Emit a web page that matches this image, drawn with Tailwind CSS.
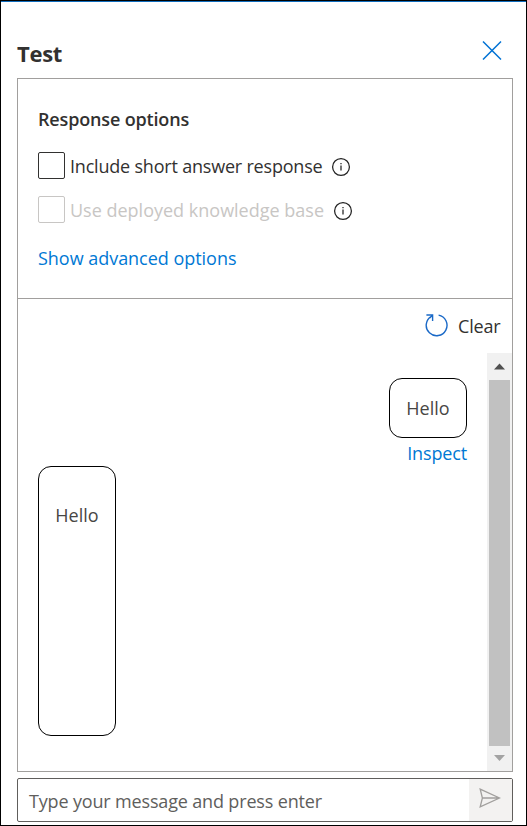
<!DOCTYPE html>
<html lang="en">
<head>
<meta charset="utf-8">
<title>Test</title>
<script src="https://cdn.jsdelivr.net/npm/@tailwindcss/browser@4"></script>
</head>
<body class="bg-white">
<div class="w-[527px] h-[826px] border border-black overflow-hidden font-['Open_Sans','Noto_Sans',sans-serif] text-[18px] leading-6 text-[#323130]">
  <div class="h-full border-t border-[#0f6cbd] pl-4 pr-[13px] flex flex-col">
    <header class="h-[76px] shrink-0 flex justify-between">
      <h1 class="mt-[35px] text-[22px] leading-8 font-bold tracking-[-0.3px] whitespace-nowrap"><span>Test</span></h1>
      <button aria-label="Close" class="mt-[38px] mr-[11px] size-5"><svg class="size-5" viewBox="0 0 20 20" fill="none" stroke="#0072d4" stroke-width="1.5"><path d="M1 1.5 19 19.5M19 1.5 1 19.5"/></svg></button>
    </header>
    <main class="h-[694px] shrink-0 border border-[#a19f9d] flex flex-col">
      <section class="h-[220px] shrink-0 border-b border-[#a19f9d] pl-5 pt-7">
        <h2 class="font-semibold text-[18px] leading-6 tracking-[-0.16px] whitespace-nowrap"><span>Response options</span></h2>
        <div class="mt-[21px] flex items-center h-[27px] whitespace-nowrap">
          <span class="size-[27px] border border-[#323130] rounded-[2px]"></span>
          <span class="ml-[5px] w-[254px] tracking-[-0.2px]"><span>Include short answer response</span></span>
          <svg class="ml-[7px] mt-[3px] size-5" viewBox="0 0 20 20" fill="none" stroke="#222" stroke-width="1.25"><circle cx="10" cy="10" r="8.4"/><path d="M10 8.5v5M10 6v1.3"/></svg>
        </div>
        <div class="mt-[17px] flex items-center h-[27px] whitespace-nowrap">
          <span class="size-[27px] border border-[#c8c6c4] rounded-[2px]"></span>
          <span class="ml-[5px] w-[254px] text-[#c8c6c4]"><span>Use deployed knowledge base</span></span>
          <svg class="ml-[9px] mt-[3px] size-5" viewBox="0 0 20 20" fill="none" stroke="#222" stroke-width="1.25"><circle cx="10" cy="10" r="8.4"/><path d="M10 8.5v5M10 6v1.3"/></svg>
        </div>
        <a class="block mt-[23px] text-[#0078d4] tracking-[-0.03px] whitespace-nowrap"><span>Show advanced options</span></a>
      </section>
      <div class="h-[54px] shrink-0 flex justify-end pr-3">
        <svg class="mt-[14px] size-6" viewBox="0 0 24 24" fill="none" stroke="#1a69c7" stroke-width="1.4"><path d="M14.6 2.1A10.4 10.4 0 1 1 7.4 3.3M2.4 2H8.6V8M8.3 2.5 5.7 5"/></svg>
        <span class="ml-2.5 mt-[15px] w-[42px] tracking-[-0.2px]"><span>Clear</span></span>
      </div>
      <div class="flex-1 flex min-h-0">
        <div class="flex-1 px-5 pt-[25px] flex flex-col">
          <div class="self-end w-[78px] h-[60px] border border-black rounded-[13px] flex items-center justify-center text-[#484644]"><span>Hello</span></div>
          <a class="self-end mt-[3px] h-[25px] text-[#0078d4] tracking-[-0.15px]"><span>Inspect</span></a>
          <div class="w-[78px] h-[270px] border border-black rounded-[13px] pt-9 text-center text-[#484644]"><span>Hello</span></div>
        </div>
        <div class="w-[25px] bg-[#f1f1f1] flex flex-col items-center justify-between">
          <svg class="w-[25px] h-[27px]" viewBox="0 0 25 27"><path d="M7 16.5 12.5 10.5 18 16.5Z" fill="#505050"/></svg>
          <div class="w-[21px] flex-1 bg-[#c1c1c1]"></div>
          <svg class="w-[25px] h-[25px]" viewBox="0 0 25 25"><path d="M7 9 18 9 12.5 15Z" fill="#a3a3a3"/></svg>
        </div>
      </div>
    </main>
    <div class="mt-1.5 h-11 shrink-0 border border-[#605e5c] rounded-[2px] flex">
      <div class="flex-1 pl-[11px] pt-2.5 text-[#605e5c] tracking-[-0.16px] whitespace-nowrap"><span>Type your message and press enter</span></div>
      <button aria-label="Send" class="w-[43px] bg-[#f3f2f1]"><svg class="block ml-2.5 -mt-1 w-[22px] h-5" viewBox="0 0 22 20" fill="none" stroke="#a19f9d" stroke-width="1.3"><path d="M1.2 1.2 20.5 10 1.2 18.8 3.4 10ZM3.4 10H20"/></svg></button>
    </div>
  </div>
</div>
</body>
</html>
